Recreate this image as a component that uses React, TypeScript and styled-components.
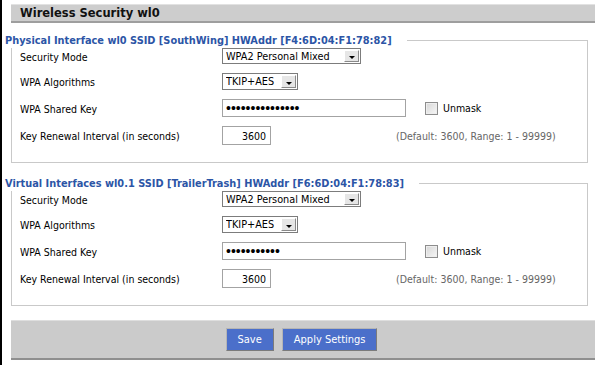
import React from "react";
import styled, { createGlobalStyle } from "styled-components";

const Global = createGlobalStyle`
  html, body { margin: 0; padding: 0; background: #fff; }
  body {
    font-family: "DejaVu Sans Condensed", "DejaVu Sans", sans-serif;
    font-size: 10.5px;
    color: #000;
  }
`;

const Page = styled.div`
  box-sizing: border-box;
  min-height: 365px;
  border-left: 2px solid #000;
  padding: 4px 0 0 9px;
  display: flex;
  flex-direction: column;
`;

const Header = styled.h2`
  margin: 0;
  height: 19px;
  box-sizing: border-box;
  background: #cdcdcd;
  border-top: 1px solid #e2e2e2;
  border-bottom: 2px solid #9e9e9e;
  padding-left: 9px;
  display: flex;
  align-items: center;
  font: bold 11.5px "DejaVu Sans", sans-serif;
  color: #111;
`;

const Fieldset = styled.fieldset<{ $top: number }>`
  margin: ${(p) => p.$top}px 7px 0 0;
  padding: 0 0 17px 8px;
  border: 1px solid #c9c9c9;
  min-width: 0;
  display: flex;
  flex-direction: column;
  gap: 9px;
`;

const Legend = styled.legend`
  margin-left: -17px;
  padding: 0 15px 0 2px;
  font: bold 10.9px "DejaVu Sans Condensed", "DejaVu Sans", sans-serif;
  line-height: 15px;
  color: #2c55a6;
`;

const Row = styled.div<{ $h?: number }>`
  display: flex;
  align-items: center;
  height: ${(p) => p.$h ?? 17}px;
`;

const Label = styled.label`
  width: 202px;
  flex: none;
  padding-top: 1px;
`;

const SelectWrap = styled.div<{ $w: number; $h: number }>`
  position: relative;
  width: ${(p) => p.$w}px;
  height: ${(p) => p.$h}px;
`;

const Select = styled.select`
  appearance: none;
  box-sizing: border-box;
  width: 100%;
  height: 100%;
  margin: 0;
  padding: 0 0 0 3px;
  border: 1px solid #7c7c7c;
  border-radius: 0;
  background: #fff;
  font: 10.8px "DejaVu Sans Condensed", "DejaVu Sans", sans-serif;
  color: #000;
`;

const ArrowBox = styled.span`
  position: absolute;
  right: 2px;
  top: 2px;
  bottom: 2px;
  width: 15px;
  box-sizing: border-box;
  background: #e6e6e6;
  border: 1px solid;
  border-color: #fff #8a8a8a #8a8a8a #fff;
  pointer-events: none;
  display: flex;
  align-items: center;
  justify-content: center;
  padding-top: 3px;
`;

const Triangle = styled.span`
  width: 0;
  height: 0;
  border-left: 3px solid transparent;
  border-right: 3px solid transparent;
  border-top: 3px solid #000;
`;

const TextInput = styled.input<{ $w: number; $h: number; $right?: boolean }>`
  box-sizing: border-box;
  width: ${(p) => p.$w}px;
  height: ${(p) => p.$h}px;
  margin: 0;
  padding: 0 4px;
  border: 1px solid #a3a3a3;
  background: #fff;
  text-align: ${(p) => (p.$right ? "right" : "left")};
  font: 10.5px "DejaVu Sans Condensed", "DejaVu Sans", sans-serif;
  color: #000;
`;

const Password = styled(TextInput)`
  font: 14px "Liberation Sans", Arial, sans-serif;
  padding: 0 3px;
`;

const Check = styled.input`
  appearance: none;
  box-sizing: border-box;
  width: 13px;
  height: 13px;
  margin: 0 5px 0 19px;
  border: 1px solid #8d8d8d;
  background: linear-gradient(135deg, #d6d6d6, #f7f7f7);
  box-shadow: inset 0 0 0 1px #eeeeee;
`;

const Hint = styled.span`
  margin-left: 125px;
  color: #666;
`;

const ButtonBar = styled.div`
  margin-top: 14px;
  height: 40px;
  box-sizing: border-box;
  background: #cbcbcb;
  border-top: 1px solid #dedede;
  border-bottom: 2px solid #8f8f8f;
  display: flex;
  align-items: center;
  justify-content: center;
  gap: 8px;
  padding-right: 3px;
`;

const Button = styled.button`
  height: 23px;
  box-sizing: border-box;
  padding: 0 11px;
  background: #4b6fca;
  color: #fff;
  border: 1px solid;
  border-color: #b5b5b5 #7b7b7b #7b7b7b #b5b5b5;
  font: 11px "DejaVu Sans Condensed", "DejaVu Sans", sans-serif;
  cursor: pointer;
`;

type IfaceProps = {
  top: number;
  title: string;
  keyLen: number;
};

function Iface({ top, title, keyLen }: IfaceProps) {
  return (
    <Fieldset $top={top}>
      <Legend>{title}</Legend>
      <Row $h={16}>
        <Label>Security Mode</Label>
        <SelectWrap $w={139} $h={16}>
          <Select defaultValue="psk2mixed">
            <option value="psk2mixed">WPA2 Personal Mixed</option>
          </Select>
          <ArrowBox>
            <Triangle />
          </ArrowBox>
        </SelectWrap>
      </Row>
      <Row>
        <Label>WPA Algorithms</Label>
        <SelectWrap $w={76} $h={17}>
          <Select defaultValue="tkipaes">
            <option value="tkipaes">TKIP+AES</option>
          </Select>
          <ArrowBox>
            <Triangle />
          </ArrowBox>
        </SelectWrap>
      </Row>
      <Row $h={18}>
        <Label>WPA Shared Key</Label>
        <Password type="password" readOnly value={"x".repeat(keyLen)} $w={184} $h={18} />
        <Check type="checkbox" />
        <span>Unmask</span>
      </Row>
      <Row $h={19}>
        <Label>Key Renewal Interval (in seconds)</Label>
        <TextInput readOnly value="3600" $w={49} $h={19} $right />
        <Hint>(Default: 3600, Range: 1 - 99999)</Hint>
      </Row>
    </Fieldset>
  );
}

export default function App() {
  return (
    <>
      <Global />
      <Page>
        <Header>Wireless Security wl0</Header>
        <Iface
          top={10}
          title="Physical Interface wl0 SSID [SouthWing] HWAddr [F4:6D:04:F1:78:82]"
          keyLen={15}
        />
        <Iface
          top={13}
          title="Virtual Interfaces wl0.1 SSID [TrailerTrash] HWAddr [F6:6D:04:F1:78:83]"
          keyLen={11}
        />
        <ButtonBar>
          <Button type="button">Save</Button>
          <Button type="button">Apply Settings</Button>
        </ButtonBar>
      </Page>
    </>
  );
}
